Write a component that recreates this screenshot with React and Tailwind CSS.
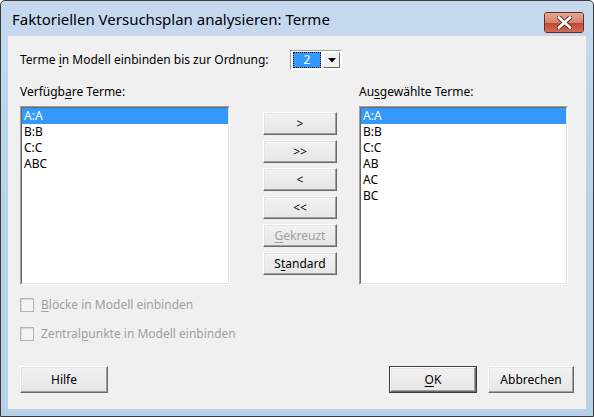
import React from "react";

const font = { fontFamily: '"Noto Sans", "Open Sans", Arial, sans-serif' };

function U({ children }) {
  return <span className="underline underline-offset-[2px] decoration-[1px]">{children}</span>;
}

function Btn({ children, w = "w-[74px]", h = "h-[23px]", disabled = false, def = false }) {
  const inner = (
    <div
      className={`flex items-center justify-center ${def ? "" : w + " " + h} bg-gradient-to-b from-[#f2f2f2] to-[#e6e6e6] border border-t-white border-l-white border-b-[#696969] border-r-[#696969] shadow-[inset_-1px_-1px_0_#a0a0a0,inset_1px_1px_0_#e3e3e3] text-[12px] ${disabled ? "text-[#a0a0a0]" : "text-black"} ${def ? "w-full h-full" : ""}`}
    >
      {children}
    </div>
  );
  if (def) {
    return <div className={`${w} ${h} border border-[#3c3c3c] flex`}>{inner}</div>;
  }
  return inner;
}

function ListBox({ items, w }) {
  return (
    <div className={`${w} h-[179px] border border-t-[#a0a0a0] border-l-[#a0a0a0] border-b-white border-r-white`}>
      <div className="w-full h-full border border-t-[#696969] border-l-[#696969] border-b-[#e3e3e3] border-r-[#e3e3e3] bg-white pt-[0px]">
        {items.map((t, i) => (
          <div
            key={t}
            className={`h-[16px] leading-[16px] pl-[2px] text-[12px] ${i === 0 ? "bg-[#3399ff] text-white" : "text-black"}`}
          >
            {t}
          </div>
        ))}
      </div>
    </div>
  );
}

function Check({ children }) {
  return (
    <div className="flex items-center h-[15px]">
      <div className="w-[14px] h-[14px] border border-[#b4b4b4] bg-[#f4f4f4] shadow-[inset_1px_1px_0_#dcdcdc]" />
      <span className="ml-[7px] text-[12px] text-[#a0a0a0]">{children}</span>
    </div>
  );
}

export default function App() {
  return (
    <div style={font} className="w-[594px] h-[417px] bg-white">
      <div className="w-[594px] h-[417px] border border-[#3a3a3a] rounded-t-[5px] bg-gradient-to-b from-[#c6d9ef] via-[#bad1ea] to-[#b8d0ea] flex flex-col overflow-hidden">
        {/* Title bar */}
        <div className="h-[35px] flex items-start relative">
          <div className="pl-[11px] pt-[8px] text-[15px] text-black leading-[20px]">
            Faktoriellen Versuchsplan analysieren: Terme
          </div>
          <div className="ml-auto mr-[9px] mt-[11px] w-[40px] h-[21px] rounded-[3px] border border-[#6b2a22] overflow-hidden flex flex-col relative">
            <div className="h-[10px] bg-gradient-to-b from-[#e7a795] to-[#d4806c]" />
            <div className="flex-1 bg-gradient-to-b from-[#c4432f] to-[#cf6d55]" />
            <svg className="absolute left-[12px] top-[3px]" width="15" height="13" viewBox="0 0 15 13">
              <path d="M2 1.5 L13 11.5 M13 1.5 L2 11.5" stroke="#5a2a25" strokeWidth="4.6" strokeLinecap="round" />
              <path d="M2 1.5 L13 11.5 M13 1.5 L2 11.5" stroke="#ffffff" strokeWidth="2.8" strokeLinecap="round" />
            </svg>
          </div>
        </div>
        {/* Client area */}
        <div className="flex-1 mx-[7px] mb-[7px] bg-[#f0f0f0] flex flex-col px-[12px] text-[12px] text-black">
          {/* Order row */}
          <div className="mt-[14px] h-[20px] flex items-center">
            <div className="w-[270px]">
              Terme <U>i</U>n Modell einbinden bis zur Ordnung:
            </div>
            <div className="w-[52px] h-[20px] border border-t-[#a0a0a0] border-l-[#a0a0a0] border-b-white border-r-white bg-white flex items-center">
              <div className="ml-[2px] w-[28px] h-[16px] bg-[#3399ff] text-white border border-dotted border-black flex items-center justify-center leading-none">
                2
              </div>
              <div className="ml-auto mr-[1px] w-[17px] h-[16px] bg-[#f0f0f0] border border-t-white border-l-white border-b-[#696969] border-r-[#696969] flex items-center justify-center">
                <svg width="8" height="5" viewBox="0 0 8 5">
                  <path d="M0 0 H8 L4 4.5 Z" fill="#000" />
                </svg>
              </div>
            </div>
          </div>
          {/* Lists */}
          <div className="mt-[14px] flex">
            <div className="flex flex-col">
              <div className="h-[22px] leading-[16px]">
                Verfügb<U>a</U>re Terme:
              </div>
              <ListBox w="w-[210px]" items={["A:A", "B:B", "C:C", "ABC"]} />
            </div>
            <div className="ml-[33px] pt-[28px] flex flex-col gap-[5px]">
              <Btn>&gt;</Btn>
              <Btn>&gt;&gt;</Btn>
              <Btn>&lt;</Btn>
              <Btn>&lt;&lt;</Btn>
              <Btn disabled>
                <span><U>G</U>ekreuzt</span>
              </Btn>
              <Btn>
                <span>S<U>t</U>andard</span>
              </Btn>
            </div>
            <div className="ml-[22px] flex flex-col">
              <div className="h-[22px] leading-[16px]">
                Au<U>s</U>gewählte Terme:
              </div>
              <ListBox w="w-[209px]" items={["A:A", "B:B", "C:C", "AB", "AC", "BC"]} />
            </div>
          </div>
          {/* Checkboxes */}
          <div className="mt-[12px] flex flex-col gap-[14px]">
            <Check>
              <U>B</U>löcke in Modell einbinden
            </Check>
            <Check>
              Zentral<U>p</U>unkte in Modell einbinden
            </Check>
          </div>
          {/* Bottom buttons */}
          <div className="mt-[25px] flex">
            <Btn w="w-[88px]" h="h-[27px]">Hilfe</Btn>
            <div className="ml-auto flex gap-[11px]">
              <Btn w="w-[88px]" h="h-[27px]" def>
                <span><U>O</U>K</span>
              </Btn>
              <Btn w="w-[86px]" h="h-[27px]">Abbrechen</Btn>
            </div>
          </div>
        </div>
      </div>
    </div>
  );
}
